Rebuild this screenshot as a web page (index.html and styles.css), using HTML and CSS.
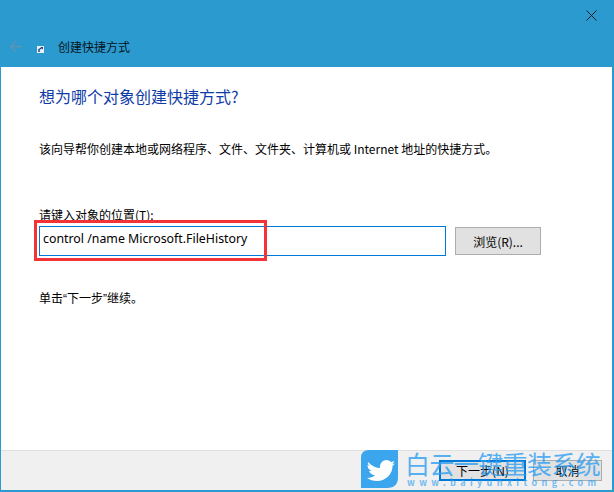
FILE: index.html
```html
<!DOCTYPE html>
<html lang="zh-CN">
<head>
<meta charset="utf-8">
<title>创建快捷方式</title>
<link rel="stylesheet" href="styles.css">
</head>
<body>
<div class="window">
  <header class="titlebar">
    <div class="close-row">
      <svg class="close" width="11" height="11" viewBox="0 0 11 11"><path d="M.5.5l10 10M10.500.5l-10 10" stroke="#0b1a22" stroke-width="1" fill="none"/></svg>
    </div>
    <div class="title-row">
      <svg class="back" width="14" height="13" viewBox="0 0 14 13"><path d="M13 6.500H1.500M7 1L1.500 6.500 7 12" stroke="#5f93b3" stroke-width="1.300" fill="none"/></svg>
      <svg class="shortcut" width="7" height="7" viewBox="0 0 7 7"><rect width="7" height="7" fill="#e8eef4"/><path d="M2 6V3.500L5 1.500" stroke="#1b3f8f" stroke-width="1.400" fill="none"/><path d="M3.500 1h2.500v2.500z" fill="#1b3f8f"/></svg>
      <span class="title">创建快捷方式</span>
    </div>
  </header>
  <main class="content">
    <h1 class="heading">想为哪个对象创建快捷方式?</h1>
    <p class="desc">该向导帮你创建本地或网络程序、文件、文件夹、计算机或 Internet 地址的快捷方式。</p>
    <label class="label" for="target">请键入对象的位置(T):</label>
    <div class="input-row">
      <div class="highlight-wrap">
        <input class="input" id="target" type="text" value="control /name Microsoft.FileHistory">
        <div class="highlight"></div>
      </div>
      <button class="btn browse" type="button">浏览(R)...</button>
    </div>
    <p class="hint">单击<span class="quote">“</span>下一步<span class="quote">”</span>继续。</p>
  </main>
  <footer class="footer">
    <button class="btn next" type="button">下一步(N)</button>
    <button class="btn cancel" type="button">取消</button>
    <div class="watermark">
      <svg class="bird" width="37" height="38" viewBox="0 0 37 38">
        <path d="M8 0H37V27Q37 38 26 38H0V8Q0 0 8 0Z" fill="#3ba6ee"/>
        <path d="M7 12C11 16 15 18 19 18C18.500 13 22 10 25.500 10C27.500 10 29 11 30 12L33.500 11L31.500 14L34 13.500L31.500 16C31.500 24 25 31 16 31C12 31 9 30 6 28C9.500 28 12 27 14 25.500C10.500 25 9 23 8 21L10.500 21C7.500 19.500 6.500 17.500 6.500 15L9 16C7 14.500 6.500 14 7 12Z" fill="#fff"/>
      </svg>
      <div class="brand">
        <div class="brand-name">白云一键重装系统</div>
        <div class="brand-url">www.baiyunxitong.com</div>
      </div>
    </div>
  </footer>
</div>
</body>
</html>
```
FILE: styles.css
```css
* { box-sizing: border-box; }
html, body { margin: 0; padding: 0; }
body {
  width: 614px;
  height: 492px;
  overflow: hidden;
  font-family: "Noto Sans CJK SC", "Noto Sans", sans-serif;
  font-size: 12px;
  color: #000;
}
.window {
  width: 614px;
  height: 492px;
  display: flex;
  flex-direction: column;
  background: #fff;
  border-left: 1px solid #2b9ace;
  border-right: 2px solid #2b9ace;
  border-bottom: 2px solid #2b9ace;
}
.titlebar {
  height: 67px;
  flex: none;
  background: #2b9ace;
  display: flex;
  flex-direction: column;
  padding: 10px 0 0 0;
}
.close-row { display: flex; justify-content: flex-end; padding-right: 15px; }
.close { display: block; }
.title-row {
  display: flex;
  align-items: center;
  margin-top: 17px;
  height: 17px;
  padding-left: 8px;
}
.back { flex: none; }
.shortcut { flex: none; margin: 6px 0 0 14px; }
.title { margin-left: 14px; line-height: 17px; color: #06141c; }
.content { flex: 1; padding: 17px 0 0 38px; display: flex; flex-direction: column; }
.heading {
  margin: 0;
  font-size: 16px;
  font-weight: 400;
  line-height: 24px;
  color: #0f3ca6;
}
.desc { margin: 32px 0 0; line-height: 18px; }
.label { margin-top: 48px; line-height: 18px; display: block; }
.input-row { display: flex; align-items: center; margin-top: 2px; }
.highlight-wrap { position: relative; flex: none; }
.input {
  display: block;
  width: 407px;
  height: 30px;
  border: 1px solid #0078d7;
  padding: 0 3px 5px;
  font-family: "Noto Sans", sans-serif;
  font-size: 12.350px;
  color: #000;
  background: #fff;
  outline: none;
}
.highlight {
  position: absolute;
  left: -5px;
  top: -6px;
  width: 233px;
  height: 41px;
  border: 3px solid #f23338;
  pointer-events: none;
}
.btn {
  font-family: "Noto Sans CJK SC", "Noto Sans", sans-serif;
  font-size: 12px;
  color: #000;
  background: #e1e1e1;
  border: 1px solid #adadad;
  padding: 0;
  border-radius: 0;
}
.browse { width: 86px; height: 28px; margin-left: 9px; }
.hint { margin: 33px 0 0; line-height: 18px; }
.quote { font-family: "Liberation Sans", sans-serif; }
.footer {
  position: relative;
  height: 40px;
  flex: none;
  background: #f0f0f0;
  border-top: 1px solid #dfdfdf;
  display: flex;
  align-items: flex-start;
  padding: 9px 0 0 438px;
  gap: 7px;
}
.next { width: 87px; height: 21px; border: 2px solid #0078d7; }
.cancel { width: 69px; height: 21px; }
.watermark {
  position: absolute;
  left: 360px;
  top: -1px;
  width: 242px;
  height: 40px;
  display: flex;
  align-items: flex-start;
  gap: 7px;
  color: #2f9ff0;
  pointer-events: none;
  overflow: hidden;
}
.bird { flex: none; }
.brand { display: flex; flex-direction: column; }
.brand-name { font-size: 25px; line-height: 27px; letter-spacing: -0.600px; opacity: 0.800; white-space: nowrap; }
.brand-url { font-size: 9px; line-height: 9px; margin-top: 1px; padding-left: 2px; letter-spacing: 4.400px; font-weight: 700; opacity: 0.650; white-space: nowrap; }
```
